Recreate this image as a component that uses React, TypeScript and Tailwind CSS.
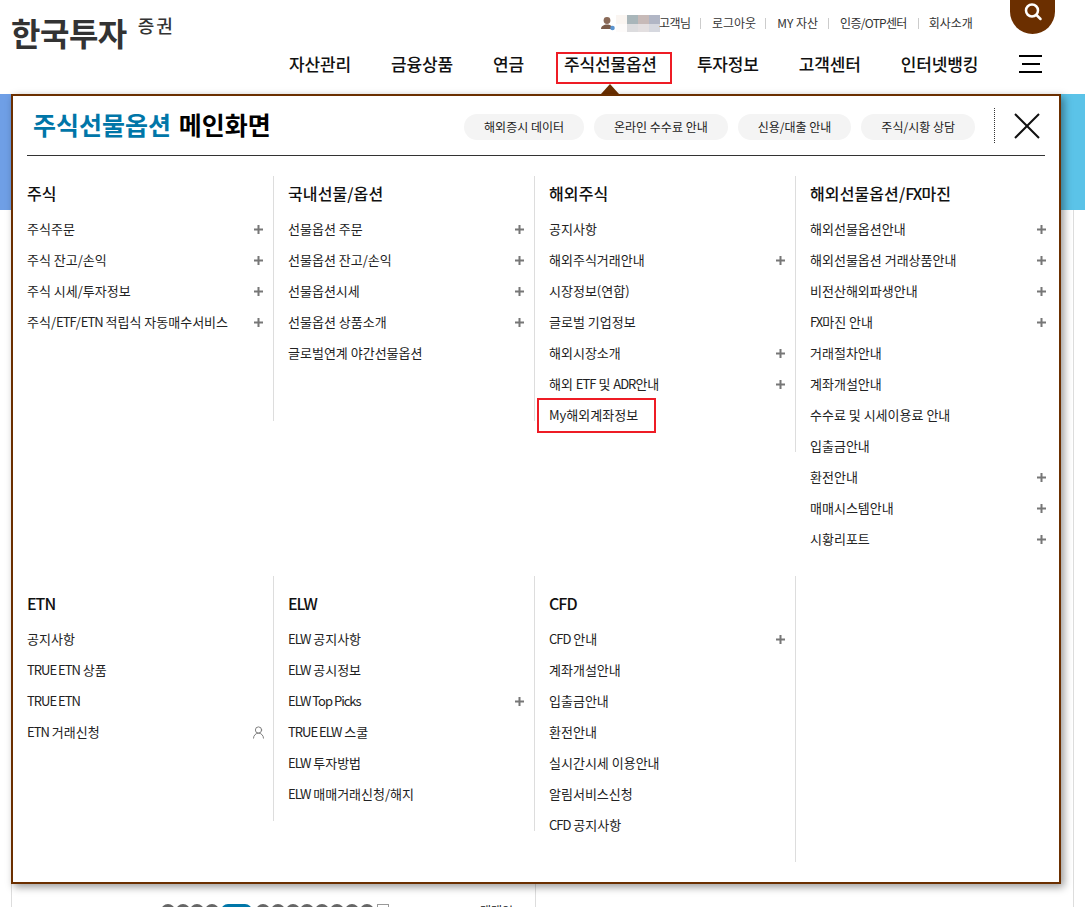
import React from "react";
import { UserRound } from "lucide-react";

type Item = { t: string; k?: "plus" | "user"; mark?: boolean };
type Col = { title: string; line: string; items: Item[] };

const p = (t: string): Item => ({ t, k: "plus" });
const n = (t: string): Item => ({ t });

const row1: Col[] = [
  { title: "주식", line: "h-[245px] border-transparent", items: [p("주식주문"), p("주식 잔고/손익"), p("주식 시세/투자정보"), p("주식/ETF/ETN 적립식 자동매수서비스")] },
  { title: "국내선물/옵션", line: "h-[245px] border-[#dddddd]", items: [p("선물옵션 주문"), p("선물옵션 잔고/손익"), p("선물옵션시세"), p("선물옵션 상품소개"), n("글로벌연계 야간선물옵션")] },
  { title: "해외주식", line: "h-[245px] border-[#dddddd]", items: [n("공지사항"), p("해외주식거래안내"), n("시장정보(연합)"), n("글로벌 기업정보"), p("해외시장소개"), p("해외 ETF 및 ADR안내"), { t: "My해외계좌정보", mark: true }] },
  { title: "해외선물옵션/FX마진", line: "h-[276px] border-[#dddddd]", items: [p("해외선물옵션안내"), p("해외선물옵션 거래상품안내"), p("비전산해외파생안내"), p("FX마진 안내"), n("거래절차안내"), n("계좌개설안내"), n("수수료 및 시세이용료 안내"), n("입출금안내"), p("환전안내"), p("매매시스템안내"), p("시황리포트")] },
];

const row2: Col[] = [
  { title: "ETN", line: "h-[245px] pt-[10px] border-transparent", items: [n("공지사항"), n("TRUE ETN 상품"), n("TRUE ETN"), { t: "ETN 거래신청", k: "user" }] },
  { title: "ELW", line: "h-[245px] pt-[10px] border-[#dddddd]", items: [n("ELW 공지사항"), n("ELW 공시정보"), p("ELW Top Picks"), n("TRUE ELW 스쿨"), n("ELW 투자방법"), n("ELW 매매거래신청/해지")] },
  { title: "CFD", line: "h-[255px] pt-[10px] border-[#dddddd]", items: [p("CFD 안내"), n("계좌개설안내"), n("입출금안내"), n("환전안내"), n("실시간시세 이용안내"), n("알림서비스신청"), n("CFD 공지사항")] },
  { title: "", line: "h-[286px] pt-[10px] border-[#dddddd]", items: [] },
];

function Plus() {
  return (
    <svg width="9" height="9" viewBox="0 0 9 9" className="shrink-0">
      <path d="M3.500 0h2v3.500H9v2H5.500V9h-2V5.500H0v-2h3.500z" fill="#777777" />
    </svg>
  );
}

// Latin capitals run tighter than the Hangul around them in the reference.
function Mixed({ text }: { text: string }) {
  return (
    <>
      {text.split(/([A-Z][A-Za-z]+(?: [A-Z][A-Za-z]+)*)/).map((part, i) =>
        i % 2 === 1 && part !== "My" ? (
          <span key={i} className="tracking-[-1px]">{part}</span>
        ) : (
          <React.Fragment key={i}>{part}</React.Fragment>
        )
      )}
    </>
  );
}

function Column({ col }: { col: Col }) {
  return (
    <div className={`border-l ${col.line} pl-[14px] pr-[10px]`}>
      <div className="mb-[4px] flex h-[34px] items-center text-[16px] font-medium tracking-[0.1px] text-[#111111]">
        <span><Mixed text={col.title} /></span>
      </div>
      {col.items.map((it) => (
        <div key={it.t} className="relative flex h-[31px] items-center justify-between text-[13px] text-[#222222]">
          <span className="whitespace-nowrap pb-[2px]"><Mixed text={it.t} /></span>
          {it.k === "plus" && <Plus />}
          {it.k === "user" && <UserRound size={15} strokeWidth={1.5} color="#777777" className="mr-[-3px]" />}
          {it.mark && <div className="absolute left-[-12px] top-[-2px] h-[35px] w-[119px] border-2 border-[#ee1c25]" />}
        </div>
      ))}
    </div>
  );
}

function Grid({ cols, h }: { cols: Col[]; h: string }) {
  return (
    <div className={`ml-[-1px] grid grid-cols-[261px_261px_261px_261px] ${h}`}>
      {cols.map((c, i) => (
        <Column key={i} col={c} />
      ))}
    </div>
  );
}

const blur = ["#faf5f1", "#a9b6ba", "#c7bab8", "#b1b6c5", "#fdfbfa", "#dcdcde", "#e3dfe0", "#d6d8df"];

export default function App() {
  return (
    <div className="relative h-[907px] w-[1085px] overflow-hidden bg-white font-['Noto_Sans_CJK_KR',sans-serif]">
      <header className="flex h-[94px]">
        <div className="flex w-[289px] items-start pl-[11px] pt-[9px]">
          <span className="text-[32px] font-bold leading-[46px] tracking-[-0.5px] text-[#333333]">한국투자</span>
          <span className="ml-[11px] mt-[4px] text-[18px] font-medium leading-[24px] tracking-[2px] text-[#333333]">증권</span>
        </div>
        <div className="flex-1">
          <div className="flex h-[44px] items-start">
            <div className="ml-[312px] mt-[15px] flex h-[17px] items-center text-[12px] text-[#333333]">
              <svg width="15" height="15" viewBox="0 0 15 15" className="shrink-0">
                <circle cx="6" cy="4.500" r="3.400" fill="#8a6a58" />
                <path d="M0 13c0-3 3-4.500 6-4.500s6 1.500 6 4.500z" fill="#7a5a48" />
                <circle cx="11.500" cy="12" r="2.300" fill="#5b94cf" />
              </svg>
              <div className="grid h-[17px] w-[44px] shrink-0 grid-cols-4">
                {blur.map((c, i) => (
                  <div key={i} style={{ backgroundColor: c }} />
                ))}
              </div>
              <span className="ml-[-1px] w-[32px] whitespace-nowrap pb-[2px] tracking-[-0.5px]">고객님</span>
              <i className="ml-[9px] mr-[11px] h-[11px] w-px bg-[#cccccc]" />
              <span className="whitespace-nowrap pb-[2px]">로그아웃</span>
              <i className="ml-[9px] mr-[11px] h-[11px] w-px bg-[#cccccc]" />
              <span className="whitespace-nowrap pb-[2px]">MY 자산</span>
              <i className="ml-[10px] mr-[11px] h-[11px] w-px bg-[#cccccc]" />
              <span className="whitespace-nowrap pb-[2px] tracking-[-0.7px]">인증/OTP센터</span>
              <i className="ml-[11px] mr-[10px] h-[11px] w-px bg-[#cccccc]" />
              <span className="whitespace-nowrap pb-[2px]">회사소개</span>
            </div>
            <div className="absolute left-[1010px] top-0 flex h-[34px] w-[45px] items-start justify-center rounded-b-[23px] bg-[#6b2f00] pt-[2px]">
              <svg width="20" height="20" viewBox="0 0 20 20" fill="none" stroke="white" strokeWidth="2.500" strokeLinecap="round">
                <circle cx="9" cy="8.500" r="6" />
                <path d="M13.500 13l4 4" />
              </svg>
            </div>
          </div>
          <nav className="flex h-[40px] items-center text-[17px] font-medium tracking-[-0.15px] text-[#111111]">
            <span className="whitespace-nowrap">자산관리</span>
            <span className="ml-[40px] whitespace-nowrap">금융상품</span>
            <span className="ml-[40px] whitespace-nowrap">연금</span>
            <span className="relative ml-[40px] whitespace-nowrap">
              주식선물옵션
              <span className="absolute left-[-8px] top-[1px] h-[32px] w-[116px] border-2 border-[#ee1c25]" />
              <span className="absolute left-[37px] top-[33px] h-0 w-0 border-x-[9px] border-b-[10px] border-x-transparent border-b-[#6b2f00]" />
            </span>
            <span className="ml-[40px] whitespace-nowrap">투자정보</span>
            <span className="ml-[40px] whitespace-nowrap">고객센터</span>
            <span className="ml-[40px] whitespace-nowrap">인터넷뱅킹</span>
            <div className="ml-[41px] flex w-[23px] flex-col items-center gap-[6px]">
              <i className="h-[2px] w-[23px] bg-black" />
              <i className="h-[2px] w-[18px] bg-black" />
              <i className="h-[2px] w-[23px] bg-black" />
            </div>
          </nav>
        </div>
      </header>

      <section className="flex h-[116px] justify-between">
        <div className="w-[12px] bg-[#6f9fe6]" />
        <div className="w-[25px] bg-[#5bc3e8]" />
      </section>

      <section className="relative mx-[11px] h-[697px] border-x border-[#dddddd] pl-[149px] pt-[694px]">
        <div className="flex items-start">
          {[0, 1, 2, 3].map((i) => (
            <i key={i} className="mr-[0.7px] h-[14px] w-[14px] rounded-full bg-[#666666]" />
          ))}
          <i className="ml-[1px] mr-[4px] h-[14px] w-[31px] rounded-full bg-[#0076a8]" />
          {[0, 1, 2, 3, 4, 5, 6, 7].map((i) => (
            <i key={i} className="mr-[0.9px] h-[14px] w-[14px] rounded-full bg-[#666666]" />
          ))}
          <i className="ml-[2px] h-[12px] w-[12px] border border-[#999999] bg-white" />
          <span className="ml-[91px] text-[12px] leading-[14px] text-[#111111]">매매일</span>
        </div>
        <div className="absolute left-[523px] top-[674px] h-[23px] w-px bg-[#dddddd]" />
      </section>

      <div className="absolute left-[11px] top-[94px] h-[790px] w-[1050px] border-2 border-[#6b2f00] bg-white shadow-[3px_3px_8px_rgba(0,0,0,0.4)]">
        <div className="mx-[14px] flex h-[60px] items-center border-b border-[#333333] pt-[2px]">
          <h1 className="mb-[3px] ml-[6px] whitespace-nowrap text-[25px] font-bold text-black">
            <span className="mr-[2px] text-[#0076a8]">주식선물옵션</span> 메인화면
          </h1>
          <div className="ml-auto flex items-center gap-[10px] text-[12px] text-[#222222]">
            {["해외증시 데이터", "온라인 수수료 안내", "신용/대출 안내", "주식/시황 상담"].map((t) => (
              <span key={t} className="flex h-[26px] items-center whitespace-nowrap rounded-full bg-[#f4f4f4] px-[20px]">{t}</span>
            ))}
          </div>
          <i className="ml-[19px] mb-[3px] h-[35px] w-0 border-l border-dotted border-[#333333]" />
          <svg width="26" height="26" viewBox="0 0 26 26" className="ml-[19px] mb-[2px] mr-[5px] shrink-0" stroke="#111111" strokeWidth="2">
            <path d="M1 1l24 24M25 1L1 25" />
          </svg>
        </div>
        <div className="pt-[20px]">
          <Grid cols={row1} h="h-[400px]" />
          <Grid cols={row2} h="h-[290px]" />
        </div>
      </div>
    </div>
  );
}
